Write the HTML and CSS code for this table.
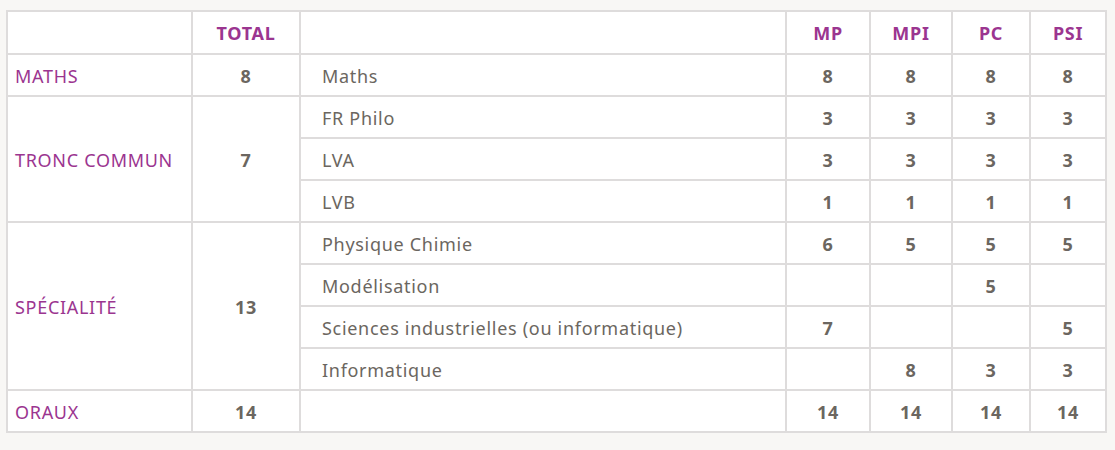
FILE: index.html
```html
<!DOCTYPE html>
<html lang="fr">
<head>
<meta charset="utf-8">
<link rel="stylesheet" href="styles.css">
</head>
<body>
<table class="grid">
  <colgroup>
    <col class="c-cat"><col class="c-total"><col class="c-subj"><col class="c-mp"><col class="c-mpi"><col class="c-pc"><col class="c-psi">
  </colgroup>
  <thead>
    <tr>
      <th></th><th class="num">TOTAL</th><th></th><th class="num">MP</th><th class="num">MPI</th><th class="num">PC</th><th class="num">PSI</th>
    </tr>
  </thead>
  <tbody>
    <tr>
      <td class="cat">MATHS</td><td class="val">8</td><td class="subj">Maths</td><td class="val">8</td><td class="val">8</td><td class="val">8</td><td class="val">8</td>
    </tr>
    <tr>
      <td class="cat" rowspan="3">TRONC COMMUN</td><td class="val" rowspan="3">7</td><td class="subj">FR Philo</td><td class="val">3</td><td class="val">3</td><td class="val">3</td><td class="val">3</td>
    </tr>
    <tr>
      <td class="subj">LVA</td><td class="val">3</td><td class="val">3</td><td class="val">3</td><td class="val">3</td>
    </tr>
    <tr>
      <td class="subj">LVB</td><td class="val">1</td><td class="val">1</td><td class="val">1</td><td class="val">1</td>
    </tr>
    <tr>
      <td class="cat" rowspan="4">SPÉCIALITÉ</td><td class="val" rowspan="4">13</td><td class="subj">Physique Chimie</td><td class="val">6</td><td class="val">5</td><td class="val">5</td><td class="val">5</td>
    </tr>
    <tr>
      <td class="subj">Modélisation</td><td class="val"></td><td class="val"></td><td class="val">5</td><td class="val"></td>
    </tr>
    <tr>
      <td class="subj">Sciences industrielles (ou informatique)</td><td class="val">7</td><td class="val"></td><td class="val"></td><td class="val">5</td>
    </tr>
    <tr>
      <td class="subj">Informatique</td><td class="val"></td><td class="val">8</td><td class="val">3</td><td class="val">3</td>
    </tr>
    <tr>
      <td class="cat">ORAUX</td><td class="val">14</td><td class="subj"></td><td class="val">14</td><td class="val">14</td><td class="val">14</td><td class="val">14</td>
    </tr>
  </tbody>
</table>
</body>
</html>
```

FILE: styles.css
```css
html, body {
  margin: 0;
  background: #f8f7f5;
}
body {
  padding: 10px 0 0 6px;
  font-family: "Noto Sans", "Open Sans", sans-serif;
  font-size: 18px;
  letter-spacing: 0.7px;
  color: #6b6660;
}
.grid {
  border-collapse: collapse;
  background: #fff;
  width: 1099px;
  table-layout: fixed;
}
.c-cat { width: 185px; }
.c-total { width: 108px; }
.c-subj { width: 486px; }
.c-mp { width: 84px; }
.c-mpi { width: 82px; }
.c-pc { width: 78px; }
.c-psi { width: 76px; }
.grid th, .grid td {
  border: 2px solid #dedcdc;
  height: 39px;
  padding: 1px 8px 0;
  vertical-align: middle;
}
.grid th {
  height: 40px;
  color: #9b3590;
  font-weight: 700;
  text-align: center;
}
.grid .cat {
  color: #9b3590;
  text-align: left;
  padding-left: 7px;
}
.grid .val {
  text-align: center;
  font-weight: 700;
}
.grid .subj {
  padding-left: 21px;
}
```
